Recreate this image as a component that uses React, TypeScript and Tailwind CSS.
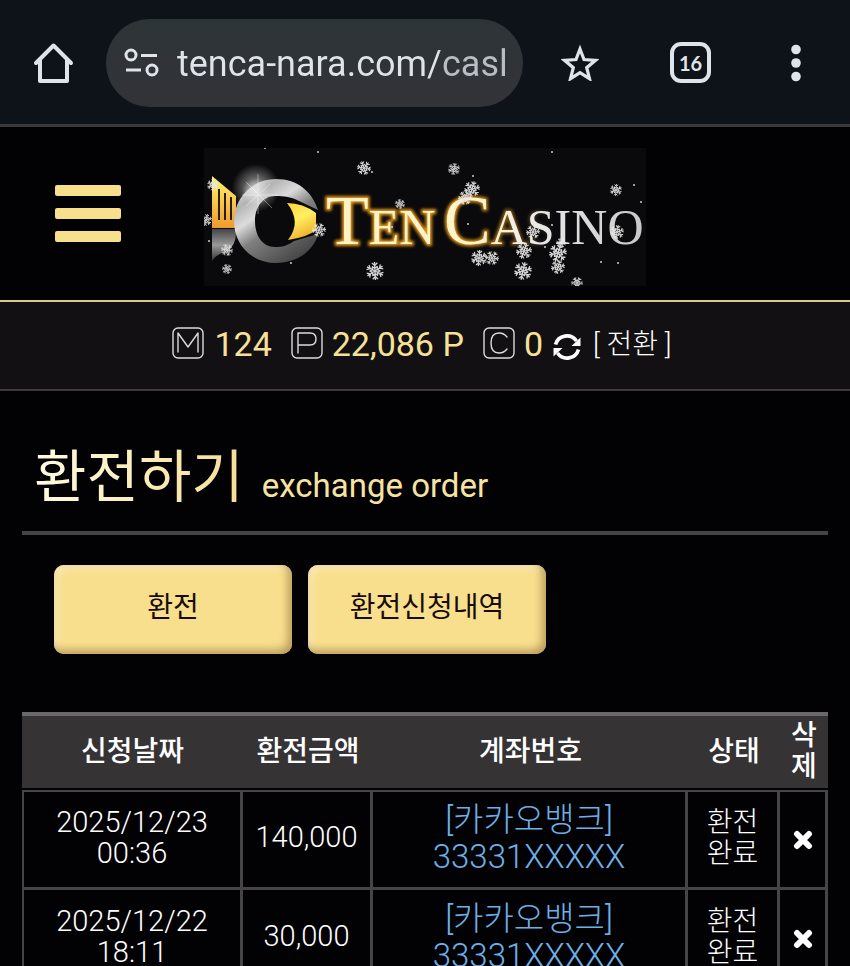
import { useState } from 'react';

const records = [
  { date: '2025/12/23', time: '00:36', amount: '140,000', bank: '[카카오뱅크]', account: '33331XXXXX' },
  { date: '2025/12/22', time: '18:11', amount: '30,000', bank: '[카카오뱅크]', account: '33331XXXXX' },
];

// x, y, radius
const flakes = [
  [9, 37, 6], [160, 20, 7], [250, 21, 6], [196, 56, 5], [268, 41, 8], [261, 50, 7],
  [2, 72, 6], [23, 102, 6], [23, 121, 5], [115, 82, 7], [171, 123, 9], [329, 84, 7],
  [320, 103, 8], [275, 110, 8], [288, 110, 7], [319, 123, 9], [354, 105, 9], [354, 119, 7],
  [412, 42, 6], [413, 84, 7], [357, 95, 5], [373, 135, 6],
];

const dots = [
  [61, 0], [114, 4], [168, 24], [348, 4], [269, 28], [430, 37], [437, 54],
  [5, 93], [87, 115], [188, 79], [264, 76], [348, 77], [414, 115], [397, 114], [341, 99],
];

const Flake = ({ x, y, r }: { x: number; y: number; r: number }) => (
  <g transform={`translate(${x} ${y}) rotate(${(x * 7) % 60}) scale(${r / 10})`}>
    {[0, 60, 120, 180, 240, 300].map(a => (
      <path key={a} d="M0 0V-10M0 -6L-3 -9M0 -6L3 -9M0 -3L-3 -5M0 -3L3 -5" transform={`rotate(${a})`} />
    ))}
  </g>
);

const Logo = () => (
  <svg viewBox="0 0 442 138" className="block w-[442px] h-auto" role="img" aria-label="Ten Casino">
    <defs>
      <linearGradient id="ring" x1="0" y1="0" x2="0.7" y2="1">
        <stop offset="0" stopColor="#fff" />
        <stop offset="0.25" stopColor="#b4b4b4" />
        <stop offset="0.42" stopColor="#dcdcdc" />
        <stop offset="0.6" stopColor="#808080" />
        <stop offset="1" stopColor="#454545" />
      </linearGradient>
      <linearGradient id="gold" x1="0" y1="0" x2="0" y2="1">
        <stop offset="0" stopColor="#fff36a" />
        <stop offset="1" stopColor="#ee9a2c" />
      </linearGradient>
      <linearGradient id="eye" x1="0" y1="0" x2="0.4" y2="1">
        <stop offset="0" stopColor="#ffd23c" />
        <stop offset="0.5" stopColor="#ffee63" />
        <stop offset="1" stopColor="#efb22c" />
      </linearGradient>
      <linearGradient id="base" x1="0" y1="0" x2="0" y2="1">
        <stop offset="0" stopColor="#444" />
        <stop offset="0.5" stopColor="#999" />
        <stop offset="1" stopColor="#333" />
      </linearGradient>
      <linearGradient id="word" gradientUnits="userSpaceOnUse" x1="120" y1="0" x2="440" y2="0">
        <stop offset="0" stopColor="#fff2c4" />
        <stop offset="0.5" stopColor="#fff3cc" />
        <stop offset="0.64" stopColor="#ececec" />
        <stop offset="1" stopColor="#c8c8c8" />
      </linearGradient>
      <linearGradient id="halo" gradientUnits="userSpaceOnUse" x1="120" y1="0" x2="440" y2="0">
        <stop offset="0" stopColor="#e39a1d" />
        <stop offset="0.45" stopColor="#d8921d" />
        <stop offset="0.6" stopColor="#a8741d" stopOpacity="0.5" />
        <stop offset="0.72" stopColor="#555" stopOpacity="0" />
      </linearGradient>
      <radialGradient id="flare">
        <stop offset="0" stopColor="#fff" stopOpacity="0.9" />
        <stop offset="1" stopColor="#fff" stopOpacity="0" />
      </radialGradient>
      <filter id="soft" x="-10%" y="-30%" width="120%" height="160%">
        <feGaussianBlur stdDeviation="1.5" />
      </filter>
    </defs>
    <rect width="442" height="138" fill="#0a090b" />
    <circle cx="52" cy="40" r="24" fill="url(#flare)" opacity="0.7" />
    <path d="M8 28L32 48V80H8Z" fill="url(#gold)" />
    <path d="M15 41V72M21 45V72M27 49V72" stroke="#2b1c05" strokeWidth="2" />
    <path d="M8 81H32Q33 98 22 104Q12 106 8 113Z" fill="url(#base)" />
    <path
      d="M72 31C48 31 30 50 30 73C30 97 48 115 72 115C94 115 110 102 114 86L90 93C83 98 78 99 71 99C58 99 51 87 51 73C51 59 59 48 71 48C80 48 88 49 95 53L114 62C108 44 94 31 72 31Z"
      fill="url(#ring)"
    />
    <path d="M83 55Q99 55 112 65V82Q104 89 84 92Q98 74 83 55Z" fill="url(#eye)" />
    <circle cx="52" cy="44" r="14" fill="url(#flare)" opacity="0.7" />
    <path d="M54 26V66M38 47H74M42 34L68 60M66 36L42 58" stroke="#fff" strokeWidth="1" opacity="0.4" />
    {['halo', 'word'].map(paint => (
      <g
        key={paint}
        fill={`url(#${paint})`}
        stroke={paint === 'halo' ? 'url(#halo)' : 'none'}
        strokeWidth="4"
        filter={paint === 'halo' ? 'url(#soft)' : undefined}
        aria-hidden={paint === 'halo'}
        fontFamily="Liberation Serif, serif"
        fontSize="50"
      >
        <text x="122" y="96"><tspan fontSize="70">T</tspan>EN</text>
        <text x="240" y="96"><tspan fontSize="70">C</tspan>ASINO</text>
      </g>
    ))}
    <g stroke="#e8e8e8" strokeWidth="1.5" fill="none" opacity="0.9">
      {flakes.map(([x, y, r], i) => <Flake key={i} x={x} y={y} r={r} />)}
    </g>
    {dots.map(([x, y], i) => <circle key={i} cx={x} cy={y} r="1" fill="#ccc" />)}
  </svg>
);

const PointBadge = ({ d }: { d: string }) => (
  <svg viewBox="0 0 32 32" className="size-8 mb-1 shrink-0" fill="none" stroke="#dcdcdc" strokeWidth="1.4">
    <rect x="1" y="1" width="30" height="30" rx="5" />
    <path d={d} strokeLinecap="round" strokeLinejoin="round" />
  </svg>
);

const BrowserBar = () => {
  const [url, setUrl] = useState('tenca-nara.com/casl');

  return (
    <div className="flex items-center h-[127px] pt-px pl-[33px] pr-[49px] bg-[#0e131a] border-b-3 border-[#37393b] text-[#dfe3ea]">
      <button type="button" aria-label="홈" className="shrink-0">
        <svg viewBox="0 0 41 42" className="w-[41px]" fill="none" stroke="currentColor" strokeWidth="4" strokeLinejoin="round" strokeLinecap="round">
          <path d="M3 21L20.500 3.500L38 21M7 18V39H34V18" />
        </svg>
      </button>
      <div className="flex items-center flex-1 min-w-0 h-[88px] ml-8 pl-[18px] pr-3 rounded-full bg-linear-to-b from-[#2d3438] to-[#323338]">
        <svg viewBox="0 0 35 29" className="w-[35px] shrink-0" fill="none" stroke="currentColor" strokeWidth="3">
          <circle cx="7" cy="7" r="5" />
          <circle cx="28" cy="22" r="5" />
          <path d="M17 7.500H33M2 22H17" />
        </svg>
        <input
          type="text"
          aria-label="주소"
          value={url}
          onChange={e => setUrl(e.target.value)}
          className="flex-1 min-w-0 ml-[18px] pt-0.5 font-['Roboto',sans-serif] text-[36px] outline-none text-transparent bg-clip-text bg-linear-to-r from-[#dfe3ea] from-78% to-[#b9bec4] to-80%"
        />
      </div>
      <button type="button" aria-label="북마크" className="ml-[38px] shrink-0">
        <svg viewBox="0 0 38 37" className="w-[38px]" fill="none" stroke="currentColor" strokeWidth="3.200">
          <path d="M19 5L23 15.500L34.500 16.300L25.700 23.700L28.500 34.700L19 28.600L9.500 34.700L12.300 23.700L3.500 16.300L15 15.500Z" />
        </svg>
      </button>
      <button type="button" aria-label="탭" className="flex items-center justify-center size-[41px] ml-[71px] shrink-0 border-4 border-current rounded-[11px] font-['Lato',sans-serif] text-xl font-bold">
        16
      </button>
      <button type="button" aria-label="메뉴 더보기" className="ml-[80px] shrink-0">
        <svg viewBox="0 0 10 38" className="w-[10px]" fill="currentColor">
          <circle cx="5" cy="5.500" r="4.800" />
          <circle cx="5" cy="19" r="4.800" />
          <circle cx="5" cy="32.500" r="4.800" />
        </svg>
      </button>
    </div>
  );
};

const PointsBar = () => (
  <div className="flex items-center justify-center h-[91px] pb-0.5 pr-1.5 border-t-2 border-t-[#d9cb8e] border-b-2 border-b-[#3c3a3c] bg-[#121012] text-[34px] text-[#f6e196]">
    <PointBadge d="M6 25V6L16 20L26 6V25" />
    <span className="ml-[10px]">124</span>
    <span className="flex items-center ml-[19px]"><PointBadge d="M7 26V6H19Q25 6 25 12Q25 18 19 18H7" /></span>
    <span className="ml-[9px]">22,086 P</span>
    <span className="flex items-center ml-[19px]"><PointBadge d="M24 10Q21 6 16 6Q8 6 8 16Q8 26 16 26Q21 26 24 22" /></span>
    <span className="ml-[9px]">0</span>
    <button type="button" className="flex items-center ml-[10px] text-[28px] font-light text-white">
      <svg viewBox="0 0 28 28" className="w-7 mt-1 mr-3" fill="none" stroke="currentColor" strokeWidth="3.600">
        <path d="M2.500 11.500A11.800 11.800 0 0 1 23.500 8M25.500 16.500A11.800 11.800 0 0 1 4.500 20" />
        <path d="M27.500 4.500V13H18.500ZM0.500 23.500V15H9.500Z" fill="currentColor" stroke="none" />
      </svg>
      [ 전환 ]
    </button>
  </div>
);

const App = () => {
  const [rows, setRows] = useState(records);

  return (
    <div className="min-h-screen bg-[#020103] text-white font-['Roboto','Noto_Sans_CJK_KR',sans-serif]">
      <BrowserBar />

      <header className="flex items-center h-[173px] pl-[55px]">
        <button type="button" aria-label="메뉴" className="flex flex-col gap-3 w-[66px]">
          <span className="h-[11px] w-full rounded-xs bg-[#f8df8e]" />
          <span className="h-[11px] w-full rounded-xs bg-[#f8df8e]" />
          <span className="h-[11px] w-full rounded-xs bg-[#f8df8e]" />
        </button>
        <a href="#" className="ml-[83px] pt-1.5">
          <Logo />
        </a>
      </header>

      <PointsBar />

      <main className="px-[22px]">
        <div className="flex items-baseline h-[144px] pt-[45px] pl-3 border-b-4 border-[#454345]">
          <h1 className="text-[57px] leading-[84px] bg-linear-to-r from-[#fffbe0] to-[#f6de94] bg-clip-text text-transparent">환전하기</h1>
          <span className="ml-[18px] text-[33px] text-[#f6e3a4]">exchange order</span>
        </div>

        <nav className="flex gap-4 px-8 mt-[30px]">
          <button type="button" className="w-[238px] h-[89px] pb-1 rounded-[10px] bg-[#f8df8e] text-[28px] text-[#180c08] shadow-[inset_-4px_-4px_8px_#b99c5a,inset_4px_4px_6px_#fbe9b8]">환전</button>
          <button type="button" className="w-[238px] h-[89px] pb-1 rounded-[10px] bg-[#f8df8e] text-[28px] text-[#180c08] shadow-[inset_-4px_-4px_8px_#b99c5a,inset_4px_4px_6px_#fbe9b8]">환전신청내역</button>
        </nav>

        <table className="w-full mt-[58px] table-fixed border-separate border-spacing-0 text-center">
          <colgroup>
            <col className="w-[221px]" />
            <col className="w-[130px]" />
            <col />
            <col className="w-[92px]" />
            <col className="w-[48px]" />
          </colgroup>
          <thead className="[&_th]:font-medium [&_th]:border-t-4 [&_th]:border-t-[#6a686a] [&_th]:border-b-2 [&_th]:border-b-[#020103] [&_th]:pb-0.5">
            <tr className="h-[78px] text-[28px] leading-[31px] bg-[#363335]">
              <th>신청날짜</th>
              <th>환전금액</th>
              <th>계좌번호</th>
              <th>상태</th>
              <th className="px-2">삭제</th>
            </tr>
          </thead>
          <tbody className="text-[28px] leading-[31px] font-light [&_td]:border-[#464446] [&_td]:border-b-3 [&_td]:border-r-3 [&_td]:pb-1 [&>tr:first-child>td]:border-t-2">
            {rows.map(row => (
              <tr key={row.date} className="h-[100px]">
                <td className="border-l-2 text-[29px]">{row.date}<br />{row.time}</td>
                <td className="text-[29px]">{row.amount}</td>
                <td className="text-[33px] leading-[37px] text-[#6cb0e8]">
                  {row.bank}<br />{row.account}
                </td>
                <td>환전<br />완료</td>
                <td>
                  <button type="button" aria-label="삭제" onClick={() => setRows(rows.filter(r => r !== row))} className="align-middle">
                    <svg viewBox="0 0 20 20" className="size-5" stroke="currentColor" strokeWidth="6" strokeLinecap="round">
                      <path d="M4 4L16 16M16 4L4 16" />
                    </svg>
                  </button>
                </td>
              </tr>
            ))}
          </tbody>
        </table>
      </main>
    </div>
  );
};

export default App;
